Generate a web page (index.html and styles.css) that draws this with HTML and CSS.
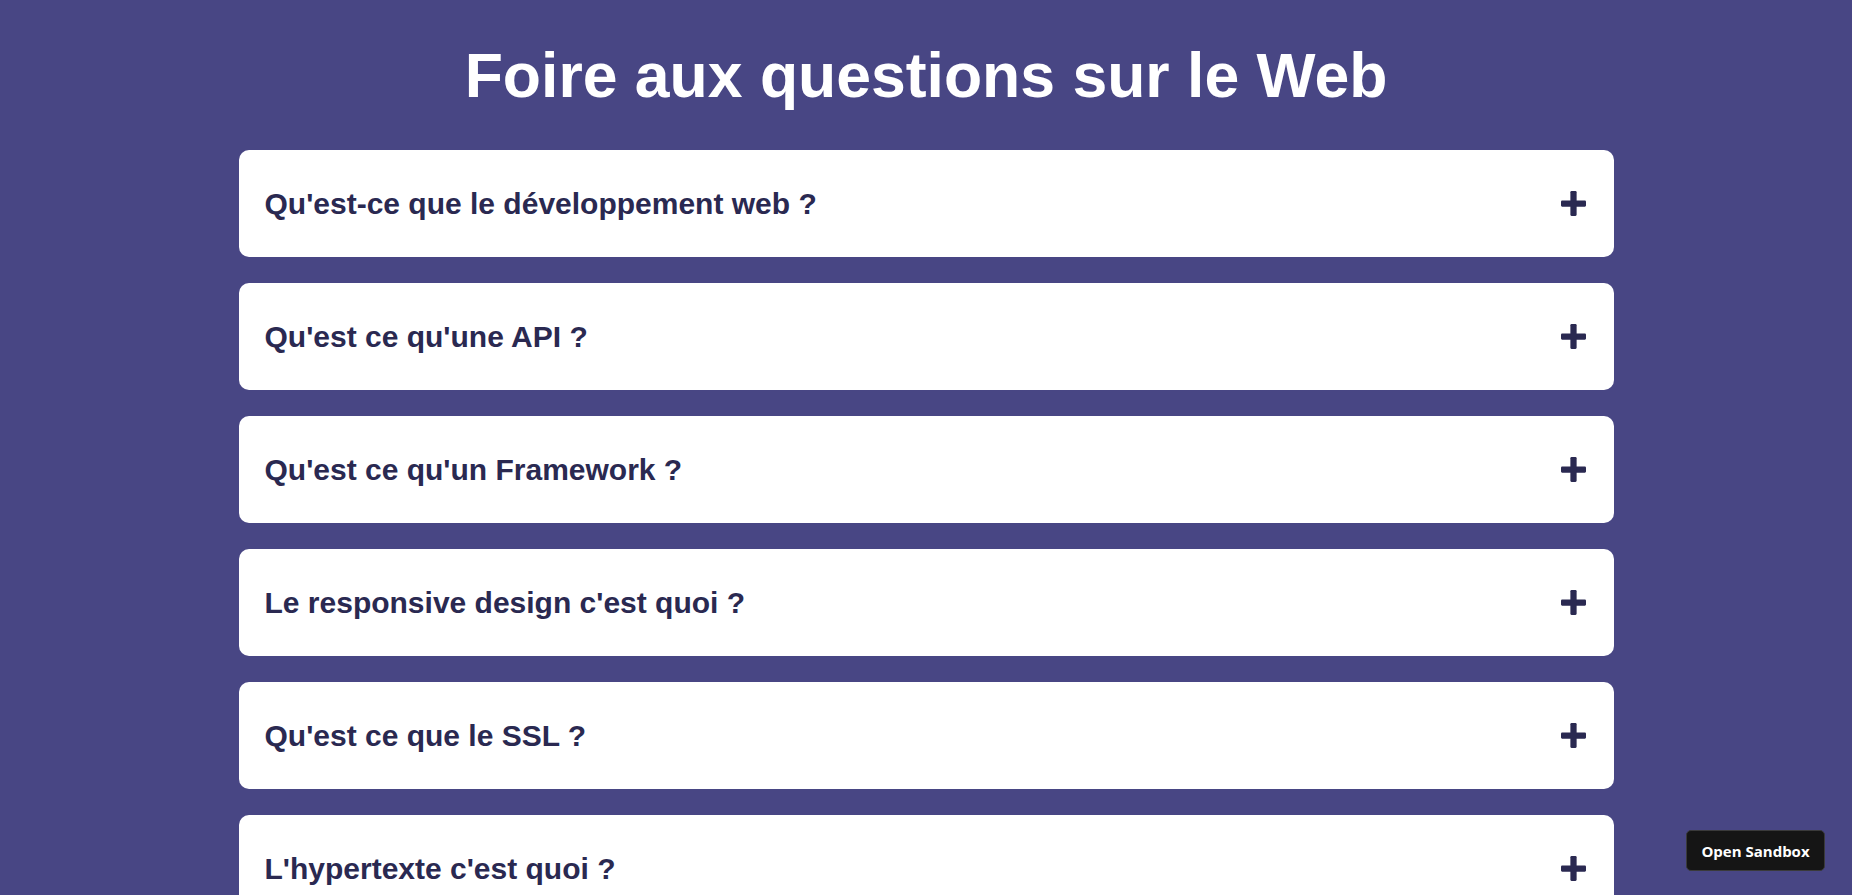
FILE: index.html
```html
<!DOCTYPE html>
<html lang="fr">
<head>
<meta charset="utf-8">
<title>FAQ</title>
<link rel="stylesheet" href="styles.css">
</head>
<body>
<main class="page">
  <h1 class="title">Foire aux questions sur le Web</h1>
  <div class="faq">
    <div class="item"><span class="question">Qu'est-ce que le développement web ?</span><svg class="plus" viewBox="0 0 26 26"><rect x="0" y="9.75" width="26" height="6.5" rx="1.2"/><rect x="9.75" y="0" width="6.5" height="26" rx="1.2"/></svg></div>
    <div class="item"><span class="question">Qu'est ce qu'une API ?</span><svg class="plus" viewBox="0 0 26 26"><rect x="0" y="9.75" width="26" height="6.5" rx="1.2"/><rect x="9.75" y="0" width="6.5" height="26" rx="1.2"/></svg></div>
    <div class="item"><span class="question">Qu'est ce qu'un Framework ?</span><svg class="plus" viewBox="0 0 26 26"><rect x="0" y="9.75" width="26" height="6.5" rx="1.2"/><rect x="9.75" y="0" width="6.5" height="26" rx="1.2"/></svg></div>
    <div class="item"><span class="question">Le responsive design c'est quoi ?</span><svg class="plus" viewBox="0 0 26 26"><rect x="0" y="9.75" width="26" height="6.5" rx="1.2"/><rect x="9.75" y="0" width="6.5" height="26" rx="1.2"/></svg></div>
    <div class="item"><span class="question">Qu'est ce que le SSL ?</span><svg class="plus" viewBox="0 0 26 26"><rect x="0" y="9.75" width="26" height="6.5" rx="1.2"/><rect x="9.75" y="0" width="6.5" height="26" rx="1.2"/></svg></div>
    <div class="item"><span class="question">L'hypertexte c'est quoi ?</span><svg class="plus" viewBox="0 0 26 26"><rect x="0" y="9.75" width="26" height="6.5" rx="1.2"/><rect x="9.75" y="0" width="6.5" height="26" rx="1.2"/></svg></div>
  </div>
</main>
<button class="sandbox">Open Sandbox</button>
</body>
</html>
```

FILE: styles.css
```css
html, body {
  margin: 0;
  padding: 0;
  background: #484684;
  overflow: hidden;
}
body {
  font-family: "Liberation Sans", Arial, sans-serif;
}
.page {
  padding-top: 38px;
}
.title {
  margin: 0 0 38px;
  text-align: center;
  color: #ffffff;
  font-size: 62.5px;
  font-weight: bold;
  line-height: 74px;
}
.faq {
  width: 1375px;
  margin: 0 auto;
  display: flex;
  flex-direction: column;
  gap: 26px;
}
.item {
  box-sizing: border-box;
  height: 107px;
  background: #ffffff;
  border-radius: 10px;
  padding: 0 28px 0 26px;
  display: flex;
  align-items: center;
  justify-content: space-between;
}
.question {
  font-size: 30px;
  font-weight: bold;
  color: #2a2951;
}
.plus {
  width: 25px;
  height: 25px;
  fill: #2a2951;
}
.sandbox {
  position: fixed;
  right: 27px;
  bottom: 24px;
  width: 139px;
  height: 41px;
  background: #151515;
  color: #ffffff;
  border: 1px solid #3a3a3a;
  border-radius: 5px;
  font-family: "Open Sans", sans-serif;
  font-weight: 700;
  font-size: 15px;
  padding: 0;
}
```
